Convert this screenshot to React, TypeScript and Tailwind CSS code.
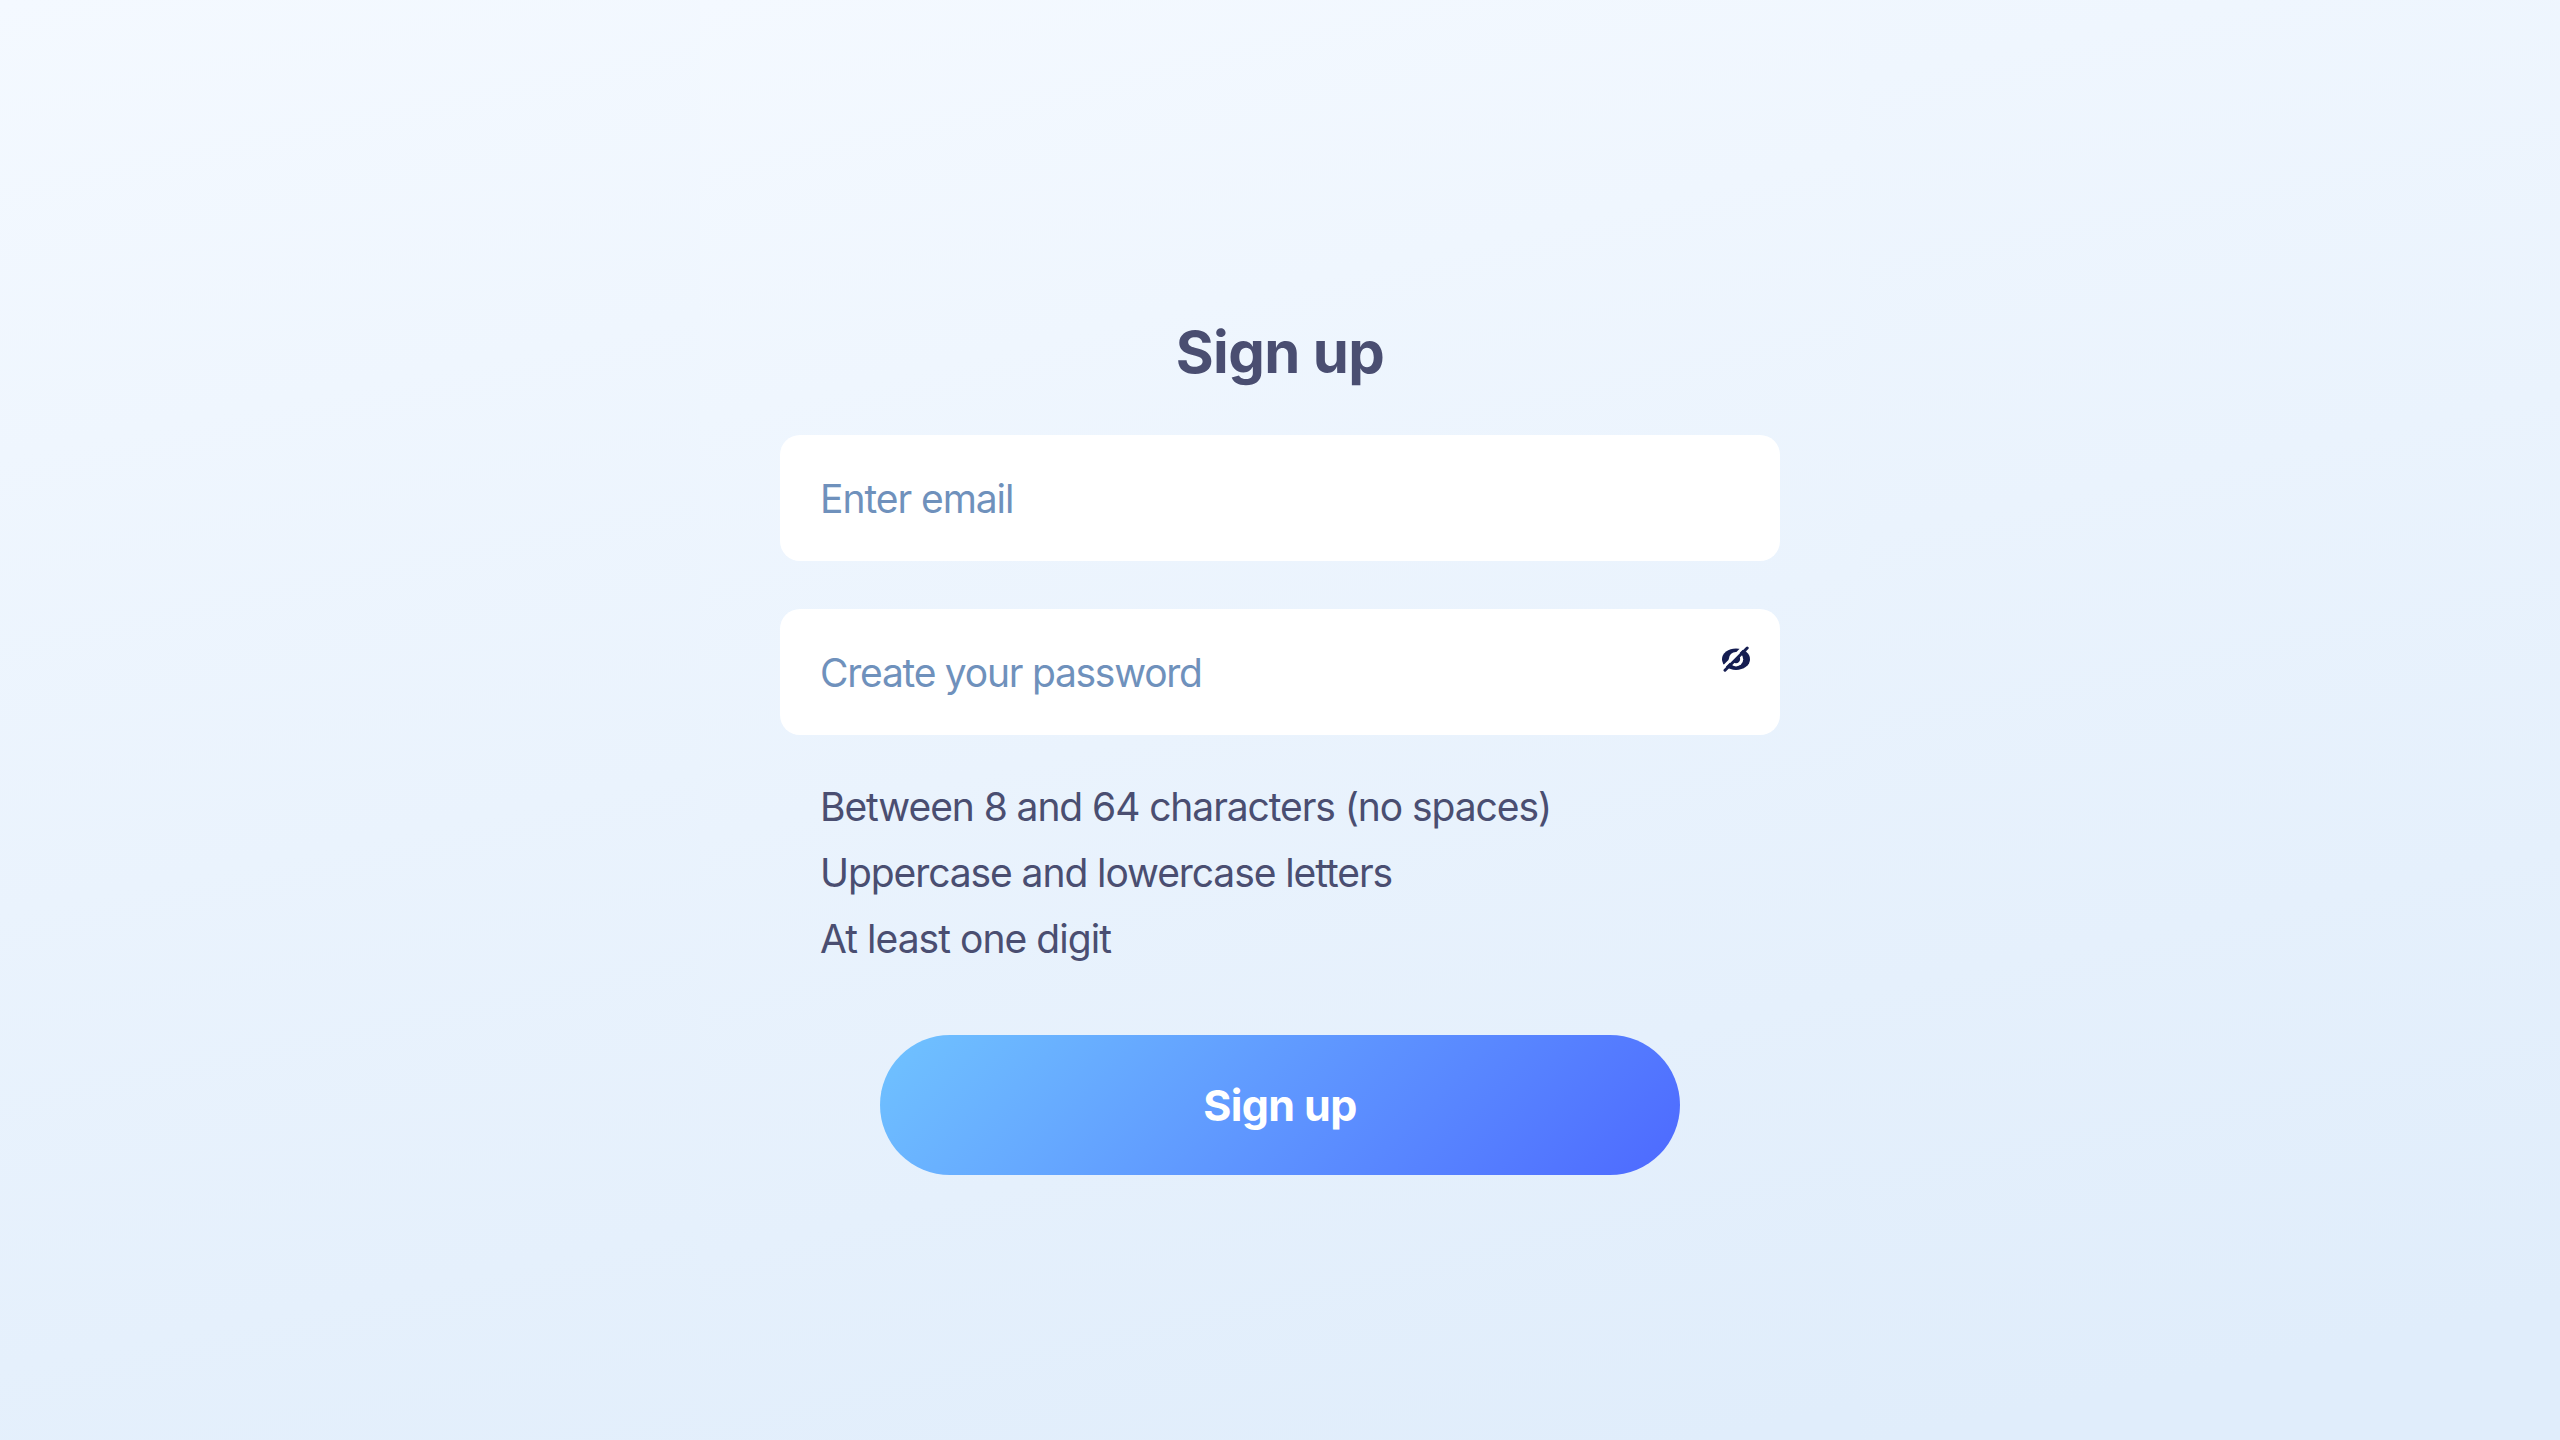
import React from "react";

const field =
  "block h-[126px] w-full rounded-[20px] bg-white px-10 text-[39px] text-[#4a4e71] outline-none placeholder:text-[#6f91bc] placeholder:opacity-100";

function HiddenIcon() {
  return (
    <svg width="30" height="26" viewBox="0 0 30 26" fill="none">
      <ellipse cx="15" cy="13.2" rx="14" ry="10.8" fill="#151d51" />
      <circle cx="15" cy="13.2" r="7.2" fill="#fff" />
      <path d="M17.5 9.8a4.2 4.2 0 1 1-5.8 6Z" fill="#151d51" />
      <path d="M1.5 22L23.5 0" stroke="#fff" strokeWidth="3" />
      <path d="M4 24.2L26.2 2" stroke="#151d51" strokeWidth="3" strokeLinecap="round" />
    </svg>
  );
}

export default function App() {
  return (
    <main className="flex h-[1440px] w-[2560px] flex-col items-center overflow-hidden bg-[linear-gradient(168.5deg,#f4f9ff_0%,#e0edfb_93%)] font-['Inter',sans-serif] text-[#4a4e71]">
      <form
        className="flex h-full w-[1160px] flex-col items-center bg-[linear-gradient(166.96deg,#f4f9ff_0%,#e0edfb_98%)] px-20 pt-[315px]"
        onSubmit={(e) => e.preventDefault()}
      >
        <h1 className="h-[120px] text-[58px] leading-[74px] font-bold tracking-[-0.6px]">Sign up</h1>
        <input aria-label="Email" type="email" placeholder="Enter email" className={field + " tracking-[-1.05px]"} />
        <div className="relative mt-12 w-full">
          <input aria-label="Password" type="password" placeholder="Create your password" className={field + " tracking-[-1.25px]"} />
          <button type="button" aria-label="Show password" className="absolute top-[37px] right-[29px]">
            <HiddenIcon />
          </button>
        </div>
        <ul className="mt-[39px] w-full px-10 text-[39px] leading-[66px] tracking-[-1.08px]">
          <li>Between 8 and 64 characters (no spaces)</li>
          <li>Uppercase and lowercase letters</li>
          <li className="tracking-[-0.96px]">At least one digit</li>
        </ul>
        <button className="mt-[63px] h-[140px] w-[800px] rounded-full bg-[linear-gradient(135deg,#70c3ff_0%,#4d69ff_100%)] text-[43px] font-bold tracking-[-0.6px] text-white">
          Sign up
        </button>
      </form>
    </main>
  );
}
